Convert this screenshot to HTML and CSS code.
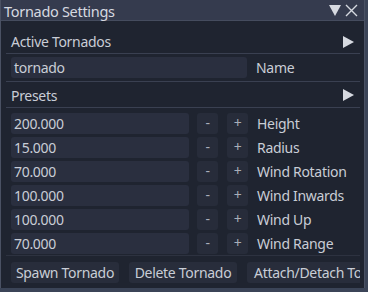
FILE: index.html
```html
<!DOCTYPE html>
<html lang="en">

<head>
    <meta charset="UTF-8">
    <meta name="viewport" content="width=device-width, initial-scale=1.0">
    <title>Tornado Settings</title>
    <link rel="stylesheet" href="styles.css">
</head>

<body>
    <div class="window">
        <div class="titlebar">
            <span class="title">Tornado Settings</span>
            <span class="title-icons">
                <svg width="12" height="11" viewBox="0 0 12 11"><polygon points="0,0 12,0 6,11" fill="#d6d9e0"/></svg>
                <svg width="13" height="13" viewBox="0 0 13 13"><path d="M1 1 L12 12 M12 1 L1 12" stroke="#d6d9e0" stroke-width="1.4" fill="none"/></svg>
            </span>
        </div>
        <div class="content">
            <div class="header">
                <span>Active Tornados</span>
                <svg width="11" height="12" viewBox="0 0 11 12"><polygon points="0,0 11,6 0,12" fill="#d6d9e0"/></svg>
            </div>
            <div class="row name-row">
                <div class="input wide">tornado</div>
                <span class="label">Name</span>
            </div>
            <div class="header presets">
                <span>Presets</span>
                <svg width="11" height="12" viewBox="0 0 11 12"><polygon points="0,0 11,6 0,12" fill="#d6d9e0"/></svg>
            </div>
            <div class="params" id="params"></div>
            <div class="buttons">
                <div class="btn">Spawn Tornado</div>
                <div class="vsep"></div>
                <div class="btn">Delete Tornado</div>
                <div class="vsep"></div>
                <div class="btn clip">Attach/Detach Tornado</div>
            </div>
        </div>
    </div>

    <script>
        const params = [
            ['200.000', 'Height'],
            ['15.000', 'Radius'],
            ['70.000', 'Wind Rotation'],
            ['100.000', 'Wind Inwards'],
            ['100.000', 'Wind Up'],
            ['70.000', 'Wind Range']
        ];

        const box = document.querySelector('#params');
        params.forEach(p => {
            let row = document.createElement('div');
            row.classList.add('row');
            row.innerHTML = `
                <div class="input">${p[0]}</div>
                <div class="step">-</div>
                <div class="step">+</div>
                <span class="label">${p[1]}</span>
            `;
            box.appendChild(row);
        });
    </script>
</body>

</html>
```

FILE: styles.css
```css
body {
    margin: 0;
    background: #3b4457;
    font-family: 'Noto Sans', 'Open Sans', sans-serif;
    font-size: 14px;
    letter-spacing: -0.3px;
    color: #c9cdd6;
    overflow: hidden;
}

.window {
    width: 365px;
    height: 288px;
    background: #1f2430;
    border-left: 1px solid #4a5163;
    border-right: 1px solid #4a5163;
    box-sizing: border-box;
    overflow: hidden;
}

.titlebar {
    height: 21px;
    background: #353b4e;
    border-bottom: 1px solid #454c5e;
    display: flex;
    align-items: center;
    justify-content: space-between;
    padding: 2px 6px 0 3px;
    box-sizing: border-box;
    color: #d6d9e0;
    font-size: 14.5px;
}

.title-icons {
    display: flex;
    align-items: center;
    gap: 4px;
    margin-top: -2px;
}

.content {
    padding: 0 4px 0 5px;
}

.header {
    height: 33px;
    display: flex;
    align-items: center;
    justify-content: space-between;
    padding: 9px 6px 0 5px;
    box-sizing: border-box;
    border-bottom: 1px solid #3a4051;
}

.header.presets {
    height: 26px;
    padding-top: 1px;
}

.row {
    display: flex;
    align-items: center;
    height: 21px;
    margin-top: 3px;
    padding-left: 5px;
}

.name-row {
    height: 27px;
    margin-top: 0;
    border-bottom: 1px solid #3a4051;
}

.name-row .input {
    height: 21px;
}

.params {
    padding-top: 2px;
}

.input {
    width: 178px;
    height: 21px;
    line-height: 21px;
    background: #2a2f3f;
    border-radius: 3px;
    padding-left: 3px;
    box-sizing: border-box;
}

.input.wide {
    width: 236px;
}

.step {
    width: 21px;
    height: 21px;
    line-height: 20px;
    text-align: center;
    background: #272c3a;
    border-radius: 3px;
    margin-left: 8px;
    color: #a9aeb9;
}

.step + .step {
    margin-left: 9px;
}

.label {
    margin-left: 9px;
}

.buttons {
    display: flex;
    align-items: center;
    height: 26px;
    margin-top: 1px;
    border-top: 1px solid #2d3240;
    padding: 3px 0 0 5px;
}

.btn {
    width: 108px;
    height: 21px;
    line-height: 21px;
    text-align: center;
    background: #282d3b;
    border-radius: 3px;
    white-space: nowrap;
    flex-shrink: 0;
}

.btn.clip {
    width: 113px;
    text-align: left;
    padding-left: 7px;
    box-sizing: border-box;
    overflow: hidden;
    border-radius: 3px 0 0 3px;
}

.vsep {
    width: 1px;
    height: 25px;
    background: #3a4051;
    margin: 0 5px;
}
```
